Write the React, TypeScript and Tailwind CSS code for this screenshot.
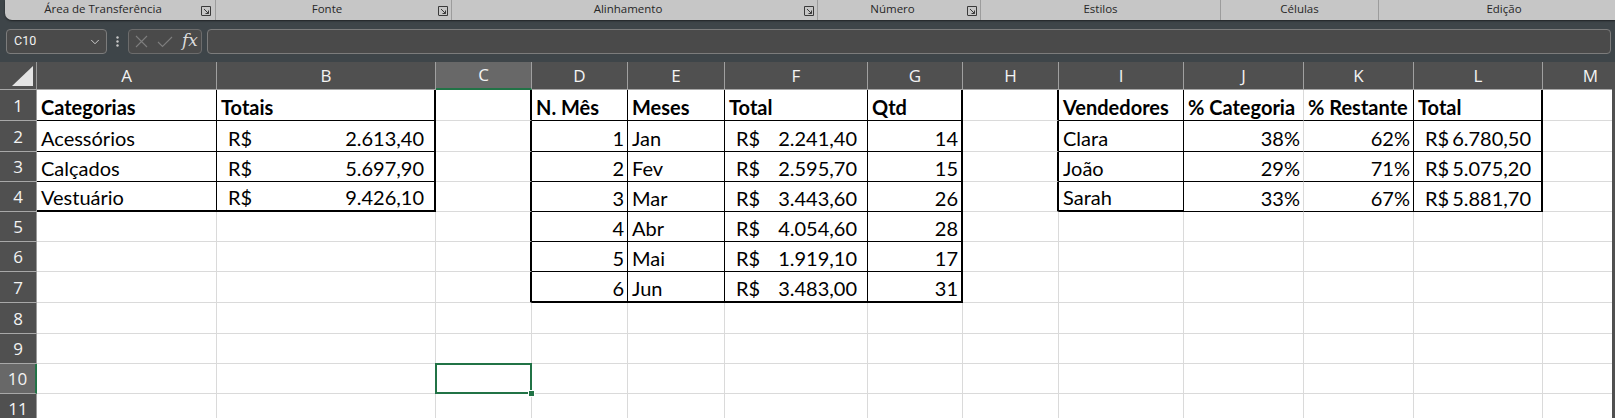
import React from "react";
import { ChevronDown } from "lucide-react";

type B = "g" | "t" | "T";
type Cell = { t?: string; b?: boolean; al?: "l" | "r" | "acc"; n?: string; pl?: string };

const COLS = ["A", "B", "C", "D", "E", "F", "G", "H", "I", "J", "K", "L", "M"];

const RIGHT: Record<B, string> = {
  g: "border-r border-r-[#dadada]",
  t: "border-r border-r-black",
  T: "border-r-2 border-r-black",
};
const BOTTOM: Record<B, string> = {
  g: "border-b border-b-[#dadada]",
  t: "border-b border-b-black",
  T: "border-b-2 border-b-black",
};

const data: Record<string, Cell> = {
  A1: { t: "Categorias", b: true },
  B1: { t: "Totais", b: true },
  A2: { t: "Acessórios" },
  A3: { t: "Calçados" },
  A4: { t: "Vestuário" },
  B2: { al: "acc", n: "2.613,40" },
  B3: { al: "acc", n: "5.697,90" },
  B4: { al: "acc", n: "9.426,10" },
  D1: { t: "N. Mês", b: true },
  E1: { t: "Meses", b: true },
  F1: { t: "Total", b: true },
  G1: { t: "Qtd", b: true },
  I1: { t: "Vendedores", b: true },
  J1: { t: "% Categoria", b: true },
  K1: { t: "% Restante", b: true },
  L1: { t: "Total", b: true },
  I2: { t: "Clara" },
  I3: { t: "João" },
  I4: { t: "Sarah" },
  J2: { t: "38%", al: "r" },
  J3: { t: "29%", al: "r" },
  J4: { t: "33%", al: "r" },
  K2: { t: "62%", al: "r" },
  K3: { t: "71%", al: "r" },
  K4: { t: "67%", al: "r" },
  L2: { al: "acc", n: "6.780,50" },
  L3: { al: "acc", n: "5.075,20" },
  L4: { al: "acc", n: "5.881,70" },
};

const months = [
  ["Jan", "2.241,40", "14"],
  ["Fev", "2.595,70", "15"],
  ["Mar", "3.443,60", "26"],
  ["Abr", "4.054,60", "28"],
  ["Mai", "1.919,10", "17"],
  ["Jun", "3.483,00", "31"],
];
months.forEach((m, i) => {
  const r = i + 2;
  data["D" + r] = { t: String(i + 1), al: "r" };
  data["E" + r] = { t: m[0] };
  data["F" + r] = { al: "acc", n: m[1] };
  data["G" + r] = { t: m[2], al: "r" };
});

function borders(row: number, c: number): [B, B] {
  let r: B = "g";
  let b: B = "g";
  // table 1
  if (row >= 1 && row <= 4 && c <= 1) {
    r = c === 0 ? "t" : "T";
    b = row < 4 ? "t" : "T";
  }
  // table 2
  if (row >= 1 && row <= 7) {
    if (c === 2) r = "T";
    if (c >= 3 && c <= 6) {
      r = c === 6 ? "T" : "t";
      b = row < 7 ? "t" : "T";
    }
  }
  // table 3
  if (row >= 1 && row <= 4) {
    if (c === 7) r = "T";
    if (c >= 8 && c <= 11) {
      r = c === 8 ? "t" : c === 9 ? "g" : c === 10 ? "t" : "T";
      b = row < 4 ? "t" : c === 8 ? "T" : "t";
    }
  }
  return [r, b];
}

function Launcher() {
  return (
    <svg width="10" height="10" viewBox="0 0 10 10" className="shrink-0" fill="none" stroke="#3a3a3a" strokeWidth="1">
      <path d="M0.5 9V0.5H9.5V9.5H0.5" />
      <path d="M3 3L7.5 7.5M7.5 4.5V7.5H4.5" />
    </svg>
  );
}

function Group({ w, label, launcher, mr, last }: { w: string; label: string; launcher?: boolean; mr?: string; last?: boolean }) {
  return (
    <div className={`${w} shrink-0 h-full flex items-end ${last ? "" : "border-r border-r-[#9c9c9c]"}`}>
      <div className="flex-1 text-center leading-[14px] pb-[4px]">{label}</div>
      {launcher ? <div className={`pb-[4px] ${mr}`}><Launcher /></div> : null}
    </div>
  );
}

const rowHeights = ["h-[31px]", "h-[31px]", "h-[30px]", "h-[30px]", "h-[30px]", "h-[30px]", "h-[31px]", "h-[31px]", "h-[30px]", "h-[30px]", "h-[30px]"];

export default function App() {
  const rows = Array.from({ length: 11 }, (_, i) => i + 1);
  return (
    <div className="w-[1615px] h-[418px] overflow-hidden bg-[#3e4549] flex flex-col" style={{ fontFamily: "'Open Sans', sans-serif" }}>
      {/* Ribbon group labels */}
      <div className="h-[20px] ml-[5px] bg-[#c6c6c6] rounded-bl-[7px] flex text-[11.5px] text-[#262626] overflow-hidden shrink-0 shadow-[0_1px_2px_rgba(0,0,0,0.5)]">
        <Group w="w-[211px]" label="Área de Transferência" launcher mr="mr-[4px]" />
        <Group w="w-[236px]" label="Fonte" launcher mr="mr-[3px]" />
        <Group w="w-[366px]" label="Alinhamento" launcher mr="mr-[3px]" />
        <Group w="w-[163px]" label="Número" launcher mr="mr-[3px]" />
        <Group w="w-[240px]" label="Estilos" />
        <Group w="w-[158px]" label="Células" />
        <Group w="w-[250px]" label="Edição" last />
      </div>

      {/* Formula bar */}
      <div className="h-[25px] mt-[9px] flex items-stretch pl-[6px] pr-[4px] shrink-0">
        <div className="w-[101px] rounded-[4px] border border-[#7c7c7c] bg-[#4a4a4a] flex items-center pl-[7px] pr-[4px]">
          <span className="flex-1 text-[12.5px] text-[#f2f2f2] leading-none" style={{ fontFamily: "Roboto, sans-serif" }}>C10</span>
          <ChevronDown size={14} color="#d6d6d6" strokeWidth={1.6} />
        </div>
        <div className="w-[21px] flex items-center justify-center">
          <svg width="3" height="11" viewBox="0 0 3 11">
            <circle cx="1.5" cy="1.5" r="1.2" fill="#c8c8c8" />
            <circle cx="1.5" cy="5.5" r="1.2" fill="#c8c8c8" />
            <circle cx="1.5" cy="9.5" r="1.2" fill="#c8c8c8" />
          </svg>
        </div>
        <div className="w-[74px] rounded-[4px] border border-[#6c6c6c] bg-[#4a4a4a] flex items-center pl-[6px] gap-[9px]">
          <svg width="13" height="13" viewBox="0 0 13 13" stroke="#7e7e7e" strokeWidth="1.1" fill="none">
            <path d="M1 1L12 12M12 1L1 12" />
          </svg>
          <svg width="16" height="12" viewBox="0 0 16 12" stroke="#7e7e7e" strokeWidth="1.1" fill="none">
            <path d="M1 6L5.5 10.5L15 1" />
          </svg>
          <span className="text-[17px] italic text-[#dcdcdc] leading-none -mt-[3px]" style={{ fontFamily: "'DejaVu Serif', 'Liberation Serif', serif" }}>fx</span>
        </div>
        <div className="flex-1 ml-[5px] rounded-[4px] border border-[#7c7c7c] bg-[#4a4a4a]" />
      </div>

      {/* Sheet */}
      <div className="mt-[8px] flex flex-1 min-h-0">
        <div className="w-[1612px] overflow-hidden shrink-0">
          <div className="grid grid-cols-[37px_180px_219px_96px_96px_97px_143px_95px_96px_125px_120px_110px_129px_96px] w-[1639px]">
            {/* header row */}
            <div className="h-[28px] bg-[#505050] border-r border-r-[#9a9a9a] border-b border-b-[#a8a8a8] relative">
              <svg className="absolute right-[3px] bottom-[3px]" width="21" height="20" viewBox="0 0 21 20">
                <polygon points="21,0 21,20 0,20" fill="#e4e4e4" />
              </svg>
            </div>
            {COLS.map((c) => (
              <div
                key={c}
                className={`h-[28px] flex items-center justify-center text-[17px] text-[#f3f3f3] border-r border-r-[#a0a0a0] ${c === "C" ? "bg-[#686868] border-b-2 border-b-[#217346]" : "bg-[#505050] border-b border-b-[#a8a8a8]"}`}
              >
                {c}
              </div>
            ))}
            {rows.map((r) => (
              <React.Fragment key={r}>
                <div
                  className={`${rowHeights[r - 1]} flex items-end justify-center pb-[2px] text-[17px] leading-[24px] text-[#f3f3f3] border-b border-b-[#a8a8a8] ${r === 10 ? "bg-[#686868] border-r-2 border-r-[#217346]" : "bg-[#505050] border-r border-r-[#9a9a9a]"}`}
                >
                  {r}
                </div>
                {COLS.map((c, ci) => {
                  const cell = data[c + r];
                  const [rb, bb] = borders(r, ci);
                  const sel = c === "C" && r === 10;
                  return (
                    <div
                      key={c}
                      className={`${rowHeights[r - 1]} bg-white ${RIGHT[rb]} ${BOTTOM[bb]} flex items-end text-[20px] leading-[24px] text-black whitespace-nowrap overflow-visible ${sel ? "relative z-10" : ""}`}
                      style={{ fontFamily: "Lato, 'Open Sans', sans-serif" }}
                    >
                      {cell ? (
                        cell.al === "acc" ? (
                          <div className="flex-1 flex justify-between pl-[11px] pr-[10px] pb-[1px]">
                            <span>R$</span>
                            <span>{cell.n}</span>
                          </div>
                        ) : (
                          <div className={`flex-1 pb-[1px] ${cell.al === "r" ? "text-right pr-[3px]" : "pl-[4px]"} ${cell.b ? "font-bold" : ""}`}>{cell.t}</div>
                        )
                      ) : null}
                      {sel ? (
                        <div className="absolute -left-[1px] -top-[1px] -right-[1px] -bottom-[1px] border-2 border-[#217346]">
                          <div className="absolute -right-[5px] -bottom-[5px] w-[7px] h-[7px] bg-[#217346] border border-white" />
                        </div>
                      ) : null}
                    </div>
                  );
                })}
              </React.Fragment>
            ))}
          </div>
        </div>
        <div className="flex-1 bg-[#505050]" />
      </div>
    </div>
  );
}
